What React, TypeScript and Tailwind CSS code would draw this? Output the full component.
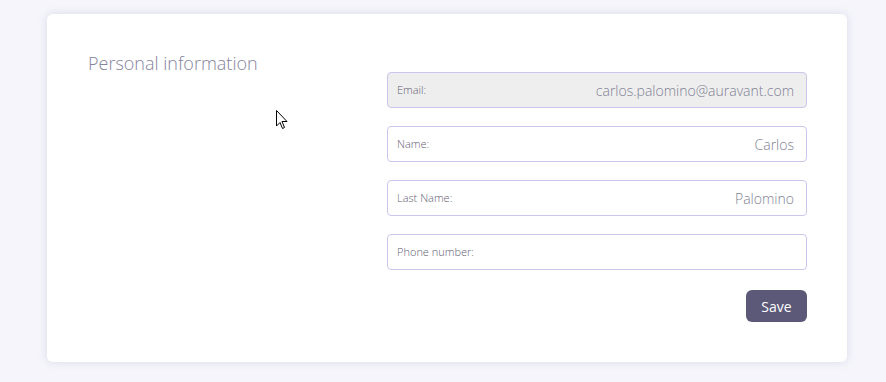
const fields = [
  { label: 'Email:', value: 'carlos.palomino@auravant.com', disabled: true },
  { label: 'Name:', value: 'Carlos' },
  { label: 'Last Name:', value: 'Palomino' },
  { label: 'Phone number:', value: '' },
]

function Field({ label, value, disabled }: { label: string; value: string; disabled?: boolean }) {
  return (
    <div
      className={`flex items-center justify-between h-9 pl-[9px] pr-[10px] rounded-[4px] border border-[#cbc7ec] ${
        disabled ? 'bg-[#eeeeee]' : 'bg-white'
      }`}
    >
      <span className="text-[11px] font-light text-[#5f5e74]">{label}</span>
      <span className="text-[14px] font-light text-[#807f93] pr-[2px]">{value}</span>
    </div>
  )
}

export default function App() {
  return (
    <div
      className="relative w-[886px] h-[382px] bg-[#f5f5fb] pt-[14px] pl-[47px]"
      style={{ fontFamily: '"Open Sans", "Noto Sans", sans-serif' }}
    >
      <div className="flex w-[800px] h-[348px] bg-white rounded-[6px] shadow-[0_0_8px_rgba(200,200,225,0.6)]">
        <div className="w-[340px] pl-[41px] pt-[37px]">
          <h2 className="text-[18px] font-light text-[#85849b] leading-6">Personal information</h2>
        </div>
        <div className="w-[420px] pt-[58px] flex flex-col">
          <div className="flex flex-col gap-[18px]">
            {fields.map((f) => (
              <Field key={f.label} {...f} />
            ))}
          </div>
          <div className="flex justify-end mt-5">
            <button className="h-8 w-[61px] rounded-[6px] bg-[#5b5977] text-white text-[14px]">Save</button>
          </div>
        </div>
      </div>

      {/* mouse cursor */}
      <svg className="absolute left-[276px] top-[110px]" width="12" height="20" viewBox="0 0 12 20" aria-hidden="true">
        <path d="M0.5 0.5 L0.5 16 L4 12.5 L6.5 18.5 L8.5 17.5 L6 11.5 L11 11.5 Z" fill="white" stroke="black" strokeWidth="1" strokeLinejoin="miter" />
      </svg>
    </div>
  )
}
